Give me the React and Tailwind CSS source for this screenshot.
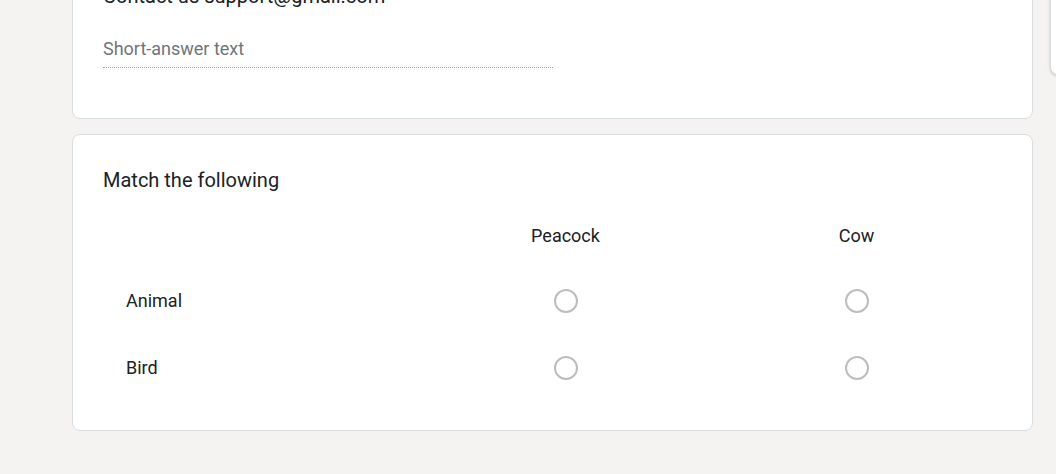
import React from 'react';

const columns = ['Peacock', 'Cow'];
const rows = ['Animal', 'Bird'];

const Radio = () => (
  <div className="h-[24px] w-[24px] rounded-full border-[2px] border-[#bdbdbd] bg-white" />
);

const App = () => {
  return (
    <div
      className="relative h-[474px] w-full overflow-hidden bg-[#f4f3f2] text-[#202124]"
      style={{ fontFamily: 'Roboto, "Noto Sans", Arial, sans-serif' }}
    >
      {/* floating toolbar, mostly off screen */}
      <div className="absolute -top-[20px] left-[1050px] h-[95px] w-[80px] rounded-bl-lg border border-[#dadce0] bg-white shadow-[0_1px_3px_rgba(60,64,67,0.25)]" />

      <div className="ml-[72px] flex w-[961px] flex-col gap-[15px]">
        {/* short answer question */}
        <div className="-mt-[50px] rounded-lg border border-[#dadce0] bg-white px-[30px] pb-[50px] pt-[30px]">
          <div className="text-[20px] leading-[30px]">Contact us support@gmail.com</div>
          <div className="mt-[26px] w-[450px] border-b border-dotted border-[#9aa0a6] pb-[6px] text-[18px] leading-[24px] text-[#70757a]">
            Short-answer text
          </div>
        </div>

        {/* grid question */}
        <div className="rounded-lg border border-[#dadce0] bg-white px-[30px] pb-[29px] pt-[30px]">
          <div className="text-[20px] leading-[30px]">Match the following</div>
          <div className="mt-[15px] grid grid-cols-[317px_291px_291px] text-[18px]">
            <div className="h-[57px]" />
            {columns.map((c) => (
              <div key={c} className="flex h-[57px] items-center justify-center pb-[7px]">
                {c}
              </div>
            ))}
            {rows.map((r) => (
              <React.Fragment key={r}>
                <div className="flex h-[67px] items-center pl-[23px]">{r}</div>
                {columns.map((c) => (
                  <div key={c} className="flex h-[67px] items-center justify-center">
                    <Radio />
                  </div>
                ))}
              </React.Fragment>
            ))}
          </div>
        </div>
      </div>
    </div>
  );
};

export default App;
